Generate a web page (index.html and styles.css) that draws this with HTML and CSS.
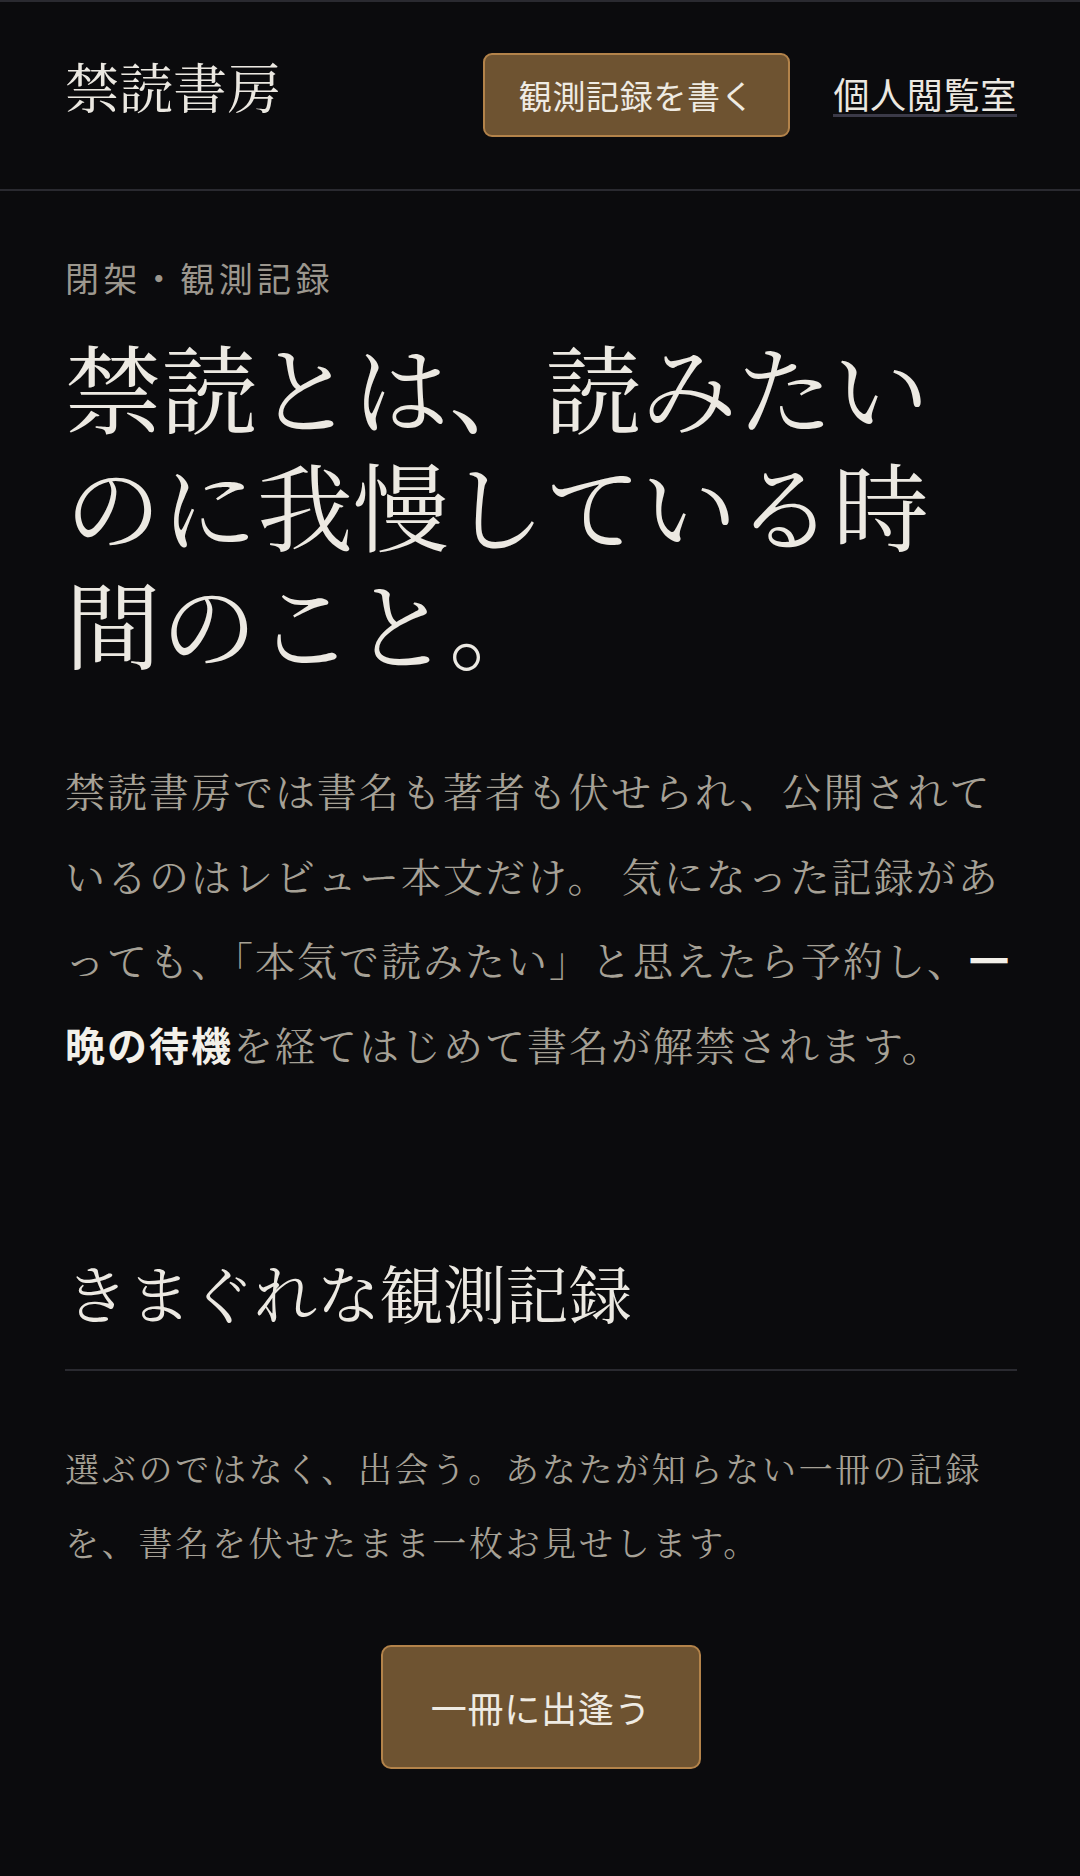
FILE: index.html
```html
<!DOCTYPE html>
<html lang="ja">
<head>
<meta charset="utf-8">
<title>禁読書房</title>
<link rel="stylesheet" href="styles.css">
</head>
<body>
<header class="site-header">
  <div class="logo">禁読書房</div>
  <nav class="nav">
    <a class="btn btn-nav" href="#">観測記録を書く</a>
    <a class="nav-link" href="#">個人閲覧室</a>
  </nav>
</header>
<main class="main">
  <section class="hero">
    <p class="eyebrow">閉架・観測記録</p>
    <h1 class="hero-title">禁読とは、読みたいのに我慢している時間のこと。</h1>
    <p class="lead">禁読書房では書名も著者も伏せられ、公開されているのはレビュー本文だけ。 気になった記録があっても、「本気で読みたい」と思えたら予約し、<strong>一晩の待機</strong>を経てはじめて書名が解禁されます。</p>
  </section>
  <section class="random">
    <h2 class="section-title">きまぐれな観測記録</h2>
    <p class="section-text">選ぶのではなく、出会う。あなたが知らない一冊の記録を、書名を伏せたまま一枚お見せします。</p>
    <div class="cta-row">
      <a class="btn btn-cta" href="#">一冊に出逢う</a>
    </div>
  </section>
</main>
</body>
</html>
```

FILE: styles.css
```css
html, body {
  margin: 0;
  padding: 0;
}
body {
  background: #0b0b0d;
  color: #ebe8e1;
  font-family: "Noto Serif CJK JP", "Noto Serif JP", serif;
  min-height: 1876px;
}
a { color: inherit; text-decoration: none; }

.site-header {
  display: flex;
  justify-content: space-between;
  align-items: baseline;
  padding: 51px 63px 52px 65px;
  border-top: 2px solid #2a2a30;
  border-bottom: 2px solid #2a2a30;
}
.logo {
  font-size: 54px;
  line-height: 1.2;
  color: #ebe8e1;
}
.nav {
  display: flex;
  align-items: baseline;
  gap: 43px;
  font-family: "Noto Sans CJK JP", sans-serif;
}
.btn {
  display: inline-block;
  background: #6e5331;
  border: 2px solid #b3834a;
  border-radius: 9px;
  color: #efebe3;
  font-family: "Noto Sans CJK JP", sans-serif;
  font-weight: 400;
}
.btn-nav {
  font-size: 33px;
  line-height: 48px;
  padding: 16px 34px;
  letter-spacing: 0.02em;
}
.nav-link {
  font-size: 36px;
  line-height: 1.1;
  color: #ebe8e1;
  border-bottom: 3px solid #3b3a48;
  letter-spacing: 0.02em;
}

.main {
  padding: 61px 63px 0 65px;
}
.eyebrow {
  margin: 0;
  font-family: "Noto Sans CJK JP", sans-serif;
  font-size: 34px;
  line-height: 1.5;
  letter-spacing: 0.13em;
  color: #9c978e;
}
.hero-title {
  margin: 23px 0 0;
  font-size: 96px;
  font-weight: 400;
  line-height: 118px;
  color: #ece9e2;
}
.lead {
  margin: 68px 0 0;
  font-size: 40px;
  line-height: 84.5px;
  letter-spacing: 0.05em;
  color: #a6a196;
}
.lead strong {
  color: #f3f0e9;
  font-family: "Noto Sans CJK JP", sans-serif;
  font-weight: 700;
}

.random {
  margin-top: 160px;
}
.section-title {
  margin: 0;
  padding-bottom: 34px;
  border-bottom: 2px solid #2a2a30;
  font-size: 63px;
  font-weight: 400;
  line-height: 1.42;
  color: #ece9e2;
}
.section-text {
  margin: 60px 0 0;
  font-size: 34px;
  line-height: 74px;
  letter-spacing: 0.08em;
  color: #a6a196;
}
.cta-row {
  display: flex;
  justify-content: center;
  margin-top: 66px;
}
.btn-cta {
  font-size: 36px;
  line-height: 48px;
  padding: 36px 48px;
  border-radius: 10px;
  letter-spacing: 0.02em;
}
```
